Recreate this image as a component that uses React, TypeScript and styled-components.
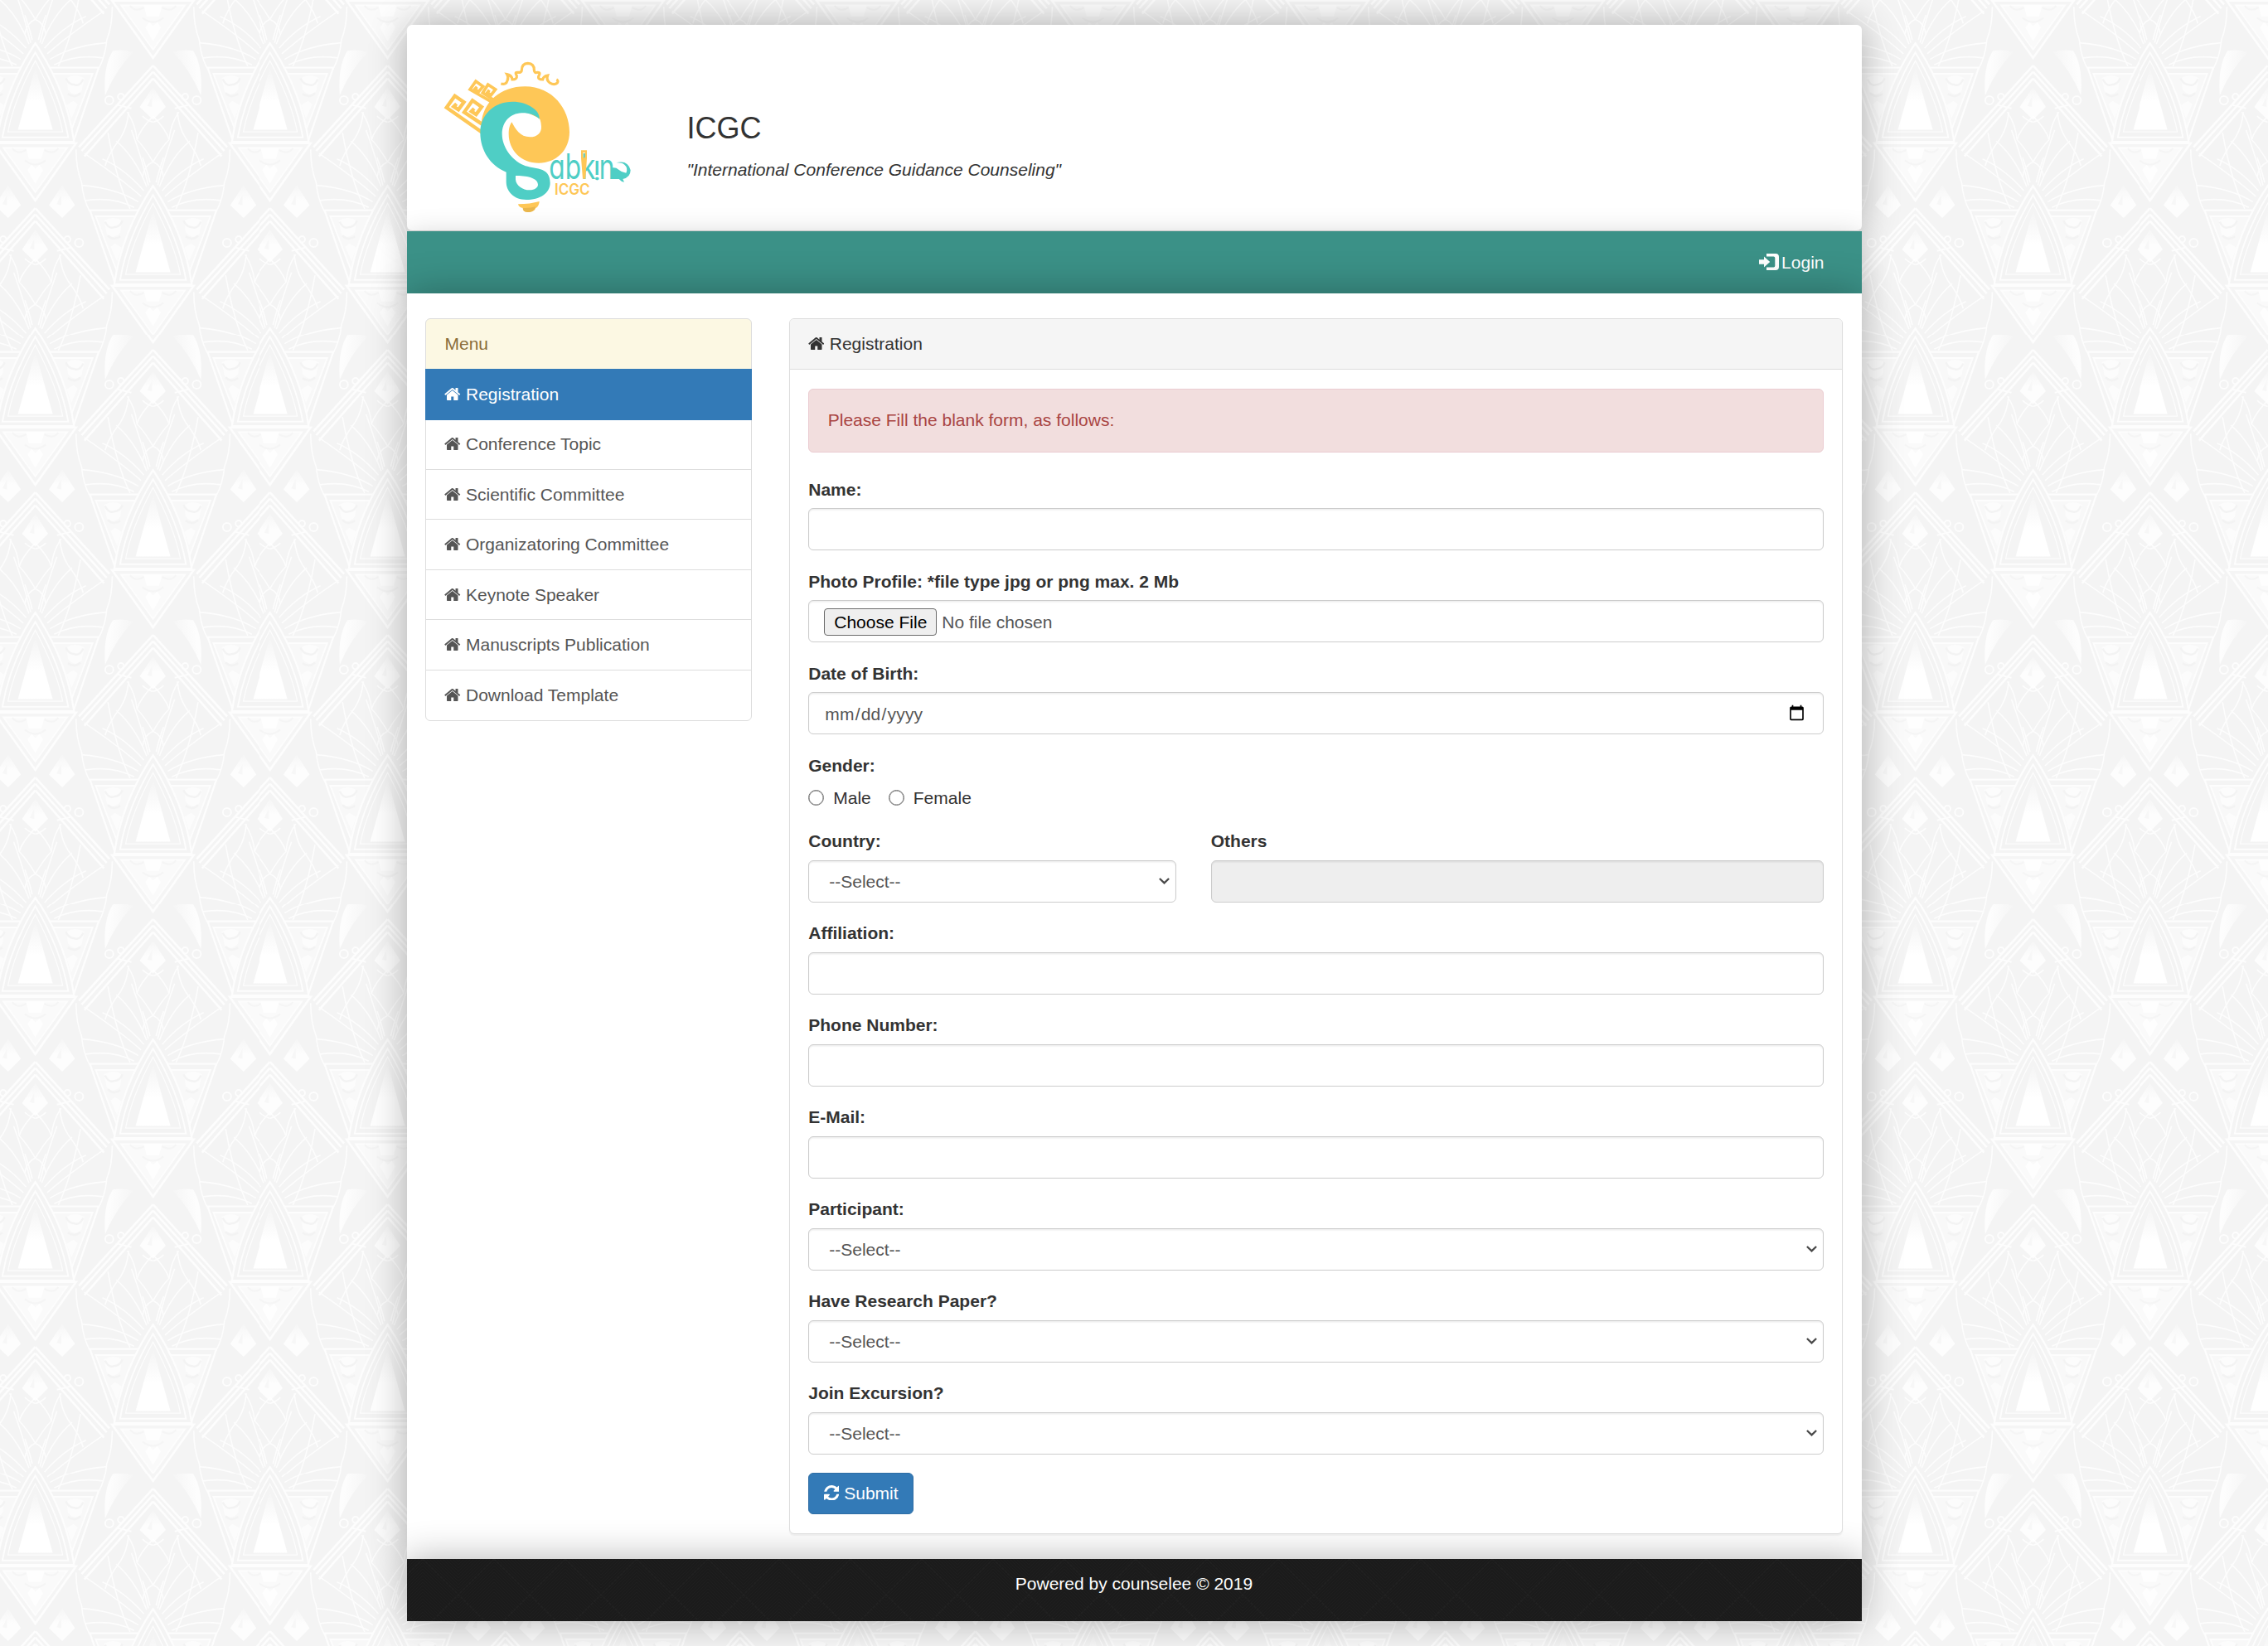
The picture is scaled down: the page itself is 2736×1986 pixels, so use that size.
import React from "react";
import styled, { createGlobalStyle, css } from "styled-components";

/* ---------- background ornament ---------- */

const fan = [
  "M440 495Q400 390 330 330",
  "M446 490Q425 400 385 290",
  "M452 480Q440 430 425 390",
  "M430 510Q360 430 280 395",
  "M420 530Q340 460 215 375",
  "M410 550Q330 500 205 490",
  "M395 570Q320 530 218 545",
  "M380 575Q330 470 300 300",
  "M463 405Q430 350 405 325Q400 270 370 225",
  "M463 405Q430 420 425 460",
  "M463 240Q415 290 405 325",
  "M425 240Q440 255 463 262",
  "M345 320Q370 280 375 225",
  "M290 420Q300 380 345 320",
  "M185 360Q185 430 205 480Q210 540 235 585",
];

const mirrored = (inner: string) => `${inner}<g transform='translate(926 0) scale(-1 1)'>${inner}</g>`;

const gem = (x: number, y: number) =>
  `<path d='M${x} ${y - 60}L${x + 46} ${y + 12}L${x} ${y + 58}L${x - 48} ${y + 12}Z' fill='url(#g)' opacity='.85'/><path d='M${x - 4} ${y - 26}L${x - 4} ${y + 12}L${x - 20} ${y + 8}Z' fill='#f7f7f7'/>`;

const unit = `<g id='u' fill='none' stroke='#fdfdfd' stroke-width='6'>
<g stroke-width='5'>${mirrored(fan.map((d) => `<path d='${d}'/>`).join(""))}</g>
${mirrored(`<path d='M463 57L195 352M463 80L205 366M463 104L215 385' stroke-width='8'/>
<circle cx='305' cy='183' r='15'/><circle cx='347' cy='170' r='11'/><path d='M335 200L385 212'/>`)}
<g stroke='none'>${gem(463, 195)}</g>
<path d='M235 580H692L603 840H325Z' fill='#f4f4f4' stroke-width='7'/>
<path d='M256 602H670L590 815H338Z' fill='#f8f8f8' stroke-width='6'/>
${mirrored(`<path d='M286 618Q320 598 350 618L345 660Q320 690 296 665ZM325 700L350 715L333 765L310 712Z' fill='#fff' stroke='none' opacity='.6'/>
<path d='M290 622Q302 648 320 642Q345 640 352 618M300 672Q320 692 345 675' stroke='#f3f3f3' stroke-width='7'/>`)}
<path d='M315 853H610L463 1060Z' fill='#f5f5f5' stroke-width='8'/>
<path d='M348 870H578L463 1030Z' fill='#fafafa' stroke-width='6'/>
<path d='M430 870H496L485 910H440ZM435 950L450 930L463 945L478 930L491 950L463 1000Z' fill='#fff' stroke='none' opacity='.8'/>
<path d='M380 872Q400 896 430 878M546 872Q526 896 496 878M425 915Q463 945 500 915' stroke='#f5f5f5' stroke-width='6'/>
<path d='M463 492Q575 660 603 848H323Q350 660 463 492Z' fill='#f4f4f4' stroke-width='7'/>
<path d='M463 525Q555 680 582 832H344Q370 680 463 525Z' fill='#f3f3f3' stroke-width='6'/>
<path d='M463 555Q540 700 562 812H364Q385 700 463 555Z' fill='#f4f4f4' stroke-width='4'/>
<path d='M463 580L526 804H400Z' fill='url(#e)' stroke='none'/>
</g>`;

const tile = `<svg xmlns='http://www.w3.org/2000/svg' width='283.5' height='343.5' viewBox='0 0 850.5 1030.5'>
<defs>${unit}
<linearGradient id='e' x1='0' y1='0' x2='0' y2='1'><stop offset='0' stop-color='#f4f4f4'/><stop offset='.55' stop-color='#fff'/></linearGradient>
<linearGradient id='g' x1='0' y1='0' x2='0' y2='1'><stop offset='0' stop-color='#f6f6f6'/><stop offset='.5' stop-color='#fff'/></linearGradient>
<linearGradient id='h' x1='0' y1='0' x2='1' y2='.2'><stop offset='.2' stop-color='#fff'/><stop offset='1' stop-color='#f5f5f5'/></linearGradient></defs>
<rect width='851' height='1031' fill='#f4f4f4'/>
<use href='#u' x='425.25' y='515.25'/><use href='#u' x='-425.25' y='515.25'/>
<use href='#u' x='425.25' y='-515.25'/><use href='#u' x='-425.25' y='-515.25'/>
<use href='#u'/><use href='#u' y='-1030.5'/><use href='#u' y='1030.5'/>
${mirrored(`<path d='M318 4Q350 -2 392 8Q330 70 290 165Q282 60 318 4Z' fill='url(#h)' opacity='.85'/>`)}
${gem(135, 550)}${gem(790, 550)}
</svg>`;

const weave = `<svg xmlns='http://www.w3.org/2000/svg' width='86' height='86'>
<rect width='86' height='86' fill='#1b1b1b'/>
<g fill='none' stroke='#1f1f1f' stroke-width='1'>${Array.from({ length: 33 }, (_, i) => {
  const y = i * 4 - 44;
  return `<path d='M0 ${y}l43 43l43 -43'/>`;
}).join("")}</g>
<path d='M0 0l86 86M86 0l-86 86' stroke='#212121' stroke-width='1.5' stroke-dasharray='3 2'/></svg>`;

const svgUrl = (s: string) => `url("data:image/svg+xml,${encodeURIComponent(s).replace(/'/g, "%27")}")`;

const GlobalStyle = createGlobalStyle`
  *, *::before, *::after { box-sizing: border-box; }
  body {
    margin: 0;
    background: #f4f4f4 ${svgUrl(tile)} 30px 60px / 283.5px 343.5px;
    font: 21px/30px "Liberation Sans", Arial, sans-serif;
    color: #333;
  }
`;

/* ---------- page frame ---------- */

const frameShadow = css`
  box-shadow: 0 0 45px rgba(0, 0, 0, 0.3);
`;

const Page = styled.div`
  display: flex;
  flex-direction: column;
  width: 1755px;
  min-height: 1926px;
  margin: 30px auto;
`;

const Header = styled.header`
  display: flex;
  height: 249px;
  background: #fff;
  border-bottom: 1px solid #d9d9d9;
  border-radius: 6px;
  padding: 30px 29.5px;
  gap: 58.5px;
  ${frameShadow}
`;

const Titles = styled.div`
  padding-top: 75px;
`;

const Title = styled.h1`
  margin: 0;
  font-size: 36px;
  line-height: 40px;
  font-weight: 400;
`;

const Tagline = styled.p`
  margin: 15px 0 0;
  font-style: italic;
`;

const NavBar = styled.nav`
  display: flex;
  justify-content: flex-end;
  height: 75px;
  padding: 22.5px 45px 0;
  background: #3b9187;
  box-shadow: 0 9px 36px rgba(0, 0, 0, 0.24);
`;

const NavLink = styled.a`
  display: flex;
  gap: 3px;
  color: #fff;
  svg {
    margin-top: 4px;
  }
`;

const Content = styled.main`
  display: grid;
  grid-template-columns: 393.75px 1fr;
  align-items: start;
  gap: 45px;
  height: 1527px;
  padding: 30px 22.5px;
  background: #fff;
  ${frameShadow}
`;

const Footer = styled.footer`
  height: 75px;
  padding-top: 15px;
  text-align: center;
  color: #fff;
  background: #1b1b1b ${svgUrl(weave)} 19px 0;
  ${frameShadow}
`;

/* ---------- side menu ---------- */

const MenuList = styled.ul`
  margin: 0;
  padding: 0;
  list-style: none;
`;

const MenuItem = styled.li<{ $kind?: "title" | "active" }>`
  position: relative;
  display: flex;
  gap: 6px;
  padding: 15px 22.5px;
  margin-bottom: -1.5px;
  border: 1px solid #ddd;
  background: #fff;
  color: #555;
  &:first-child {
    border-radius: 6px 6px 0 0;
  }
  &:last-child {
    border-radius: 0 0 6px 6px;
  }
  ${(p) =>
    p.$kind === "title" &&
    css`
      background: #fcf8e3;
      color: #8a6d3b;
    `}
  ${(p) =>
    p.$kind === "active" &&
    css`
      z-index: 2;
      background: #337ab7;
      border-color: #337ab7;
      color: #fff;
    `}
`;

/* ---------- registration panel ---------- */

const Panel = styled.section`
  position: relative;
  z-index: 1;
  background: #fff;
  border: 1px solid #ddd;
  border-radius: 6px;
  box-shadow: 0 1.5px 1.5px rgba(0, 0, 0, 0.05);
`;

const PanelHeading = styled.div`
  display: flex;
  gap: 6px;
  padding: 15px 22.5px;
  background: #f5f5f5;
  border-bottom: 1px solid #ddd;
  border-radius: 5px 5px 0 0;
`;

const PanelBody = styled.form`
  padding: 22.5px;
`;

const Alert = styled.div`
  padding: 22.5px;
  margin-bottom: 30px;
  color: #a94442;
  background: #f2dede;
  border: 1px solid #ebccd1;
  border-radius: 6px;
`;

const Group = styled.div`
  margin-bottom: 22.5px;
`;

const Pair = styled.div`
  display: grid;
  grid-template-columns: 443.5px 1fr;
  gap: 42px;
`;

const Label = styled.label`
  display: block;
  margin-bottom: 7.5px;
  font-weight: 700;
`;

const control = css`
  display: block;
  width: 100%;
  height: 51px;
  margin: 0;
  padding: 9px 18px;
  font: inherit;
  color: #555;
  background: #fff;
  border: 1px solid #ccc;
  border-radius: 6px;
  box-shadow: inset 0 1.5px 1.5px rgba(0, 0, 0, 0.075);
`;

const Input = styled.input`
  ${control}
  &:disabled {
    background: #eee;
  }
  &[type="date"] {
    padding-top: 11px;
    letter-spacing: 0.2px;
  }
  &::-webkit-calendar-picker-indicator {
    width: 21px;
    height: 21px;
    margin-top: -2px;
    padding: 3px;
  }
  &::file-selector-button {
    height: 33px;
    margin: 0 6px 0 0;
    padding: 0 11px;
    font: inherit;
    line-height: 30px;
    color: #000;
    background: #efefef;
    border: 1px solid #6b6b6b;
    border-radius: 4px;
  }
`;

const SelectBox = styled.div`
  display: grid;
  align-items: center;
  > * {
    grid-area: 1 / 1;
  }
  svg {
    justify-self: end;
    margin: 0 7.5px 1px 0;
    pointer-events: none;
  }
`;

const SelectControl = styled.select`
  ${control}
  appearance: none;
  padding: 10px 24px 8px;
`;

const Radios = styled.div`
  display: flex;
  height: 31.5px;
  padding-top: 2px;
  gap: 21px;
`;

const RadioLabel = styled.label`
  display: flex;
  gap: 11px;
`;

const Radio = styled.input`
  appearance: none;
  width: 19px;
  height: 19px;
  margin: 5px 0 0;
  border: 1px solid #767676;
  box-shadow: inset 0 0 0 0.5px #767676;
  border-radius: 50%;
  background: #fff;
`;

const Submit = styled.button`
  display: flex;
  gap: 6px;
  height: 50px;
  padding: 8.5px 17.5px;
  font: inherit;
  color: #fff;
  background: #337ab7;
  border: 1px solid #2e6da4;
  border-radius: 6px;
  svg {
    margin-top: 5px;
  }
`;

const HomeSvg = styled.svg`
  flex: none;
  margin: 4px 0.5px 0 -0.5px;
`;

/* ---------- drawings ---------- */

const HomeIcon = () => (
  <HomeSvg width="19.5" height="21" viewBox="64 0 1664 1792" fill="currentColor">
    <path d="M1472 992v480q0 26-19 45t-45 19h-384v-384h-256v384h-384q-26 0-45-19t-19-45v-480q0-1 .5-3t.5-3l575-474 575 474q1 2 1 6zm223-69l-62 74q-8 9-21 11h-3q-13 0-21-7l-692-577-692 577q-12 8-24 7-13-2-21-11l-62-74q-8-10-7-23.5t11-21.5l719-599q32-26 76-26t76 26l244 204v-195q0-14 9-23t23-9h192q14 0 23 9t9 23v408l219 182q10 8 11 21.5t-7 23.5z" />
  </HomeSvg>
);

const RefreshIcon = () => (
  <svg width="18.5" height="18.5" viewBox="128 128 1536 1536" fill="currentColor">
    <path d="M1639 1056q0 5-1 7-64 268-268 434.5t-478 166.5q-146 0-282.5-55t-243.5-157l-129 129q-19 19-45 19t-45-19-19-45v-448q0-26 19-45t45-19h448q26 0 45 19t19 45-19 45l-137 137q71 66 161 102t187 36q134 0 250-65t186-179q11-17 53-117 8-23 30-23h192q13 0 22.5 9.5t9.5 22.5zm25-800v448q0 26-19 45t-45 19h-448q-26 0-45-19t-19-45 19-45l138-138q-148-137-349-137-134 0-250 65t-186 179q-11 17-53 117-8 23-30 23h-199q-13 0-22.5-9.5t-9.5-22.5v-7q65-268 270-434.5t480-166.5q146 0 284 55.5t245 156.5l130-129q19-19 45-19t45 19 19 45z" />
  </svg>
);

const LoginIcon = () => (
  <svg width="24" height="20" viewBox="0 0 24 20" fill="currentColor">
    <path d="M0 7.3h6V3.6L13.2 10 6 16.4v-3.7H0z" />
    <path d="M9 0h11a4 4 0 0 1 4 4v12a4 4 0 0 1-4 4H9v-3.5h8.6a1.7 1.7 0 0 0 1.7-1.7V5.2a1.7 1.7 0 0 0-1.7-1.7H9z" />
  </svg>
);

const Chevron = () => (
  <svg width="13" height="8" viewBox="0 0 13 8" fill="none" stroke="#4a4a4a" strokeWidth="2.3">
    <path d="M.9 1l5.6 5.4L12.1 1" />
  </svg>
);

const Logo = () => (
  <svg width="250" height="210" viewBox="0 0 750 630">
    <g fill="none" stroke="#fec757" strokeWidth="13">
      <path d="M190 303L56 209L86 167L119 190L99 217L82 206L92 196" />
      <path d="M192 274L120 226L150 184L183 207L163 234L146 223L156 213" />
      <path d="M232 196L141 144L162 114L188 133L172 152L158 143L166 134" strokeWidth="11" />
      <path d="M236 188L187 156L206 126L233 144L217 164L204 155L211 146" strokeWidth="11" />
      <path
        d="M253 123Q272 128 276 112Q282 100 275 89Q292 92 294 108Q312 108 310 94Q302 82 312 82Q328 84 328 74Q328 50 350 49Q374 50 373 74Q374 86 386 82Q398 82 390 94Q384 108 404 108Q406 96 422 93Q416 110 430 120Q446 130 457 120Q462 112 454 108"
        strokeWidth="9.5"
      />
    </g>
    <path
      d="M182 268C188 190 250 133 340 133C440 133 501 215 501 298C501 365 452 410 390 410C325 410 281 362 281 305C281 285 285 272 292 262C306 288 322 316 358 316C385 316 400 300 399 278C398 262 396 255 392 248L300 205Z"
      fill="#fec757"
    />
    <path
      d="M392 251C376 235 350 228 328 229C285 231 257 262 257 305C257 350 290 398 335 418C370 434 431 420 431 482C431 520 392 543 345 543C298 543 272 512 272 478V443C215 420 178 365 178 300C178 235 228 188 295 188C350 188 396 220 392 251ZM306 456V470C308 492 332 508 356 508C376 508 387 498 387 488C387 466 350 455 306 456Z"
      fill="#4fcec5"
      fillRule="evenodd"
    />
    <path d="M315 559C345 559 370 555 392 549C391 561 386 571 378 573C376 583 364 588 350 588C339 588 332 582 333 573C323 572 317 568 315 559Z" fill="#fec757" />
    <path d="M332 573Q358 574 378 568C376 583 364 588 350 588C339 588 332 582 332 573Z" fill="#eab74e" />
    <g fill="#4fcec5" fontFamily="Inter, sans-serif" fontSize="126" fontWeight="400" style={{ fontFeatureSettings: '"cv11"' }}>
      <text x="427" y="468" textLength="168" lengthAdjust="spacingAndGlyphs">
        abk
      </text>
      <text transform="translate(587 403) scale(.86 -.74)">i</text>
      <text x="608" y="468" textLength="56" lengthAdjust="spacingAndGlyphs">
        n
      </text>
    </g>
    <path d="M543 364H564V392L559 467H549L543 392ZM550 372V388Q553 396 557 388V372Z" fill="#fec757" fillRule="evenodd" />
    <path d="M651 428Q668 424 679 434Q690 444 706 446Q714 428 700 416Q690 408 670 409Q712 398 722 436Q722 462 694 468L699 479Q688 478 680 468H651Z" fill="#4fcec5" />
    <text x="447" y="526" fill="#fec757" fontFamily="Inter, sans-serif" fontWeight="600" fontSize="54" textLength="128" lengthAdjust="spacingAndGlyphs">
      ICGC
    </text>
  </svg>
);

/* ---------- composed pieces ---------- */

const menu = [
  "Registration",
  "Conference Topic",
  "Scientific Committee",
  "Organizatoring Committee",
  "Keynote Speaker",
  "Manuscripts Publication",
  "Download Template",
];

const Field = ({ label, type = "text", disabled }: { label: string; type?: string; disabled?: boolean }) => (
  <Group>
    <Label>{label}</Label>
    <Input type={type} disabled={disabled} />
  </Group>
);

const SelectField = ({ label }: { label: string }) => (
  <Group>
    <Label>{label}</Label>
    <SelectBox>
      <SelectControl>
        <option>--Select--</option>
      </SelectControl>
      <Chevron />
    </SelectBox>
  </Group>
);

export default function App() {
  return (
    <>
      <GlobalStyle />
      <Page>
        <Header>
          <Logo />
          <Titles>
            <Title>ICGC</Title>
            <Tagline>"International Conference Guidance Counseling"</Tagline>
          </Titles>
        </Header>
        <NavBar>
          <NavLink>
            <LoginIcon />
            Login
          </NavLink>
        </NavBar>
        <Content>
          <MenuList>
            <MenuItem $kind="title">Menu</MenuItem>
            {menu.map((name, i) => (
              <MenuItem key={name} $kind={i === 0 ? "active" : undefined}>
                <HomeIcon />
                {name}
              </MenuItem>
            ))}
          </MenuList>
          <Panel>
            <PanelHeading>
              <HomeIcon />
              Registration
            </PanelHeading>
            <PanelBody>
              <Alert>Please Fill the blank form, as follows:</Alert>
              <Field label="Name:" />
              <Field label="Photo Profile: *file type jpg or png max. 2 Mb" type="file" />
              <Field label="Date of Birth:" type="date" />
              <Group>
                <Label>Gender:</Label>
                <Radios>
                  {["Male", "Female"].map((g) => (
                    <RadioLabel key={g}>
                      <Radio type="radio" name="gender" />
                      {g}
                    </RadioLabel>
                  ))}
                </Radios>
              </Group>
              <Pair>
                <SelectField label="Country:" />
                <Field label="Others" disabled />
              </Pair>
              <Field label="Affiliation:" />
              <Field label="Phone Number:" />
              <Field label="E-Mail:" />
              <SelectField label="Participant:" />
              <SelectField label="Have Research Paper?" />
              <SelectField label="Join Excursion?" />
              <Submit type="button">
                <RefreshIcon />
                Submit
              </Submit>
            </PanelBody>
          </Panel>
        </Content>
        <Footer>Powered by counselee © 2019</Footer>
      </Page>
    </>
  );
}
